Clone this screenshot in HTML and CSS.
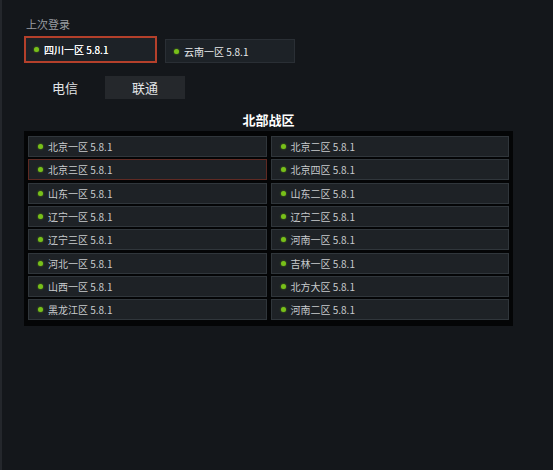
FILE: index.html
```html
<!DOCTYPE html>
<html lang="zh-CN">
<head>
    <meta charset="UTF-8">
    <title>选择服务器</title>
    <link rel="stylesheet" href="styles.css">
</head>
<body>
    <div class="page">
        <div class="label">上次登录</div>
        <div class="recent">
            <div class="recent-card selected"><span class="dot"></span>四川一区 5.8.1</div>
            <div class="recent-card"><span class="dot"></span>云南一区 5.8.1</div>
        </div>
        <div class="tabs">
            <div class="tab">电信</div>
            <div class="tab active">联通</div>
        </div>
        <div class="title">北部战区</div>
        <div class="panel">
            <div class="server"><span class="dot"></span>北京一区 5.8.1</div>
            <div class="server"><span class="dot"></span>北京二区 5.8.1</div>
            <div class="server selected"><span class="dot"></span>北京三区 5.8.1</div>
            <div class="server"><span class="dot"></span>北京四区 5.8.1</div>
            <div class="server"><span class="dot"></span>山东一区 5.8.1</div>
            <div class="server"><span class="dot"></span>山东二区 5.8.1</div>
            <div class="server"><span class="dot"></span>辽宁一区 5.8.1</div>
            <div class="server"><span class="dot"></span>辽宁二区 5.8.1</div>
            <div class="server"><span class="dot"></span>辽宁三区 5.8.1</div>
            <div class="server"><span class="dot"></span>河南一区 5.8.1</div>
            <div class="server"><span class="dot"></span>河北一区 5.8.1</div>
            <div class="server"><span class="dot"></span>吉林一区 5.8.1</div>
            <div class="server"><span class="dot"></span>山西一区 5.8.1</div>
            <div class="server"><span class="dot"></span>北方大区 5.8.1</div>
            <div class="server"><span class="dot"></span>黑龙江区 5.8.1</div>
            <div class="server"><span class="dot"></span>河南二区 5.8.1</div>
        </div>
    </div>
</body>
</html>
```

FILE: styles.css
```css
html, body {
    height: 100%;
}
body {
    margin: 0;
    background: #14171b;
    font-family: "Microsoft YaHei", "Noto Sans CJK SC", sans-serif;
    color: #d0d3d6;
    border-left: 2px solid #24272c;
    box-sizing: border-box;
}
.page {
    width: 489px;
    padding: 16px 0 0 22px;
}
.label {
    font-size: 11px;
    line-height: 16px;
    color: #9a9ea3;
    padding-left: 2px;
}
.recent {
    display: flex;
    align-items: flex-end;
    gap: 8px;
    margin-top: 4px;
}
.recent-card {
    display: flex;
    align-items: center;
    box-sizing: border-box;
    width: 130px;
    height: 24px;
    padding-left: 8px;
    background: #1d2227;
    border: 1px solid #2a2f35;
    font-size: 10px;
    color: #e8eaec;
}
.recent-card.selected {
    width: 133px;
    height: 27px;
    border: 2px solid #b4402b;
    color: #ffffff;
    text-shadow: 0 0 0.4px #ffffff;
}
.dot {
    display: inline-block;
    flex: none;
    width: 5px;
    height: 5px;
    border-radius: 50%;
    background: #78c01a;
    box-shadow: 0 0 2px #5f9a12;
    margin-right: 5px;
}
.tabs {
    display: flex;
    margin-top: 13px;
    padding-left: 1px;
}
.tab {
    width: 80px;
    height: 23px;
    line-height: 23px;
    text-align: center;
    font-size: 13px;
    color: #e2e4e6;
}
.tab.active {
    background: #25282c;
}
.title {
    margin-top: 10px;
    height: 22px;
    line-height: 22px;
    text-align: center;
    font-size: 13px;
    font-weight: bold;
    color: #ffffff;
}
.panel {
    display: grid;
    grid-template-columns: 1fr 1fr;
    grid-auto-rows: 21px;
    column-gap: 4px;
    row-gap: 2.33px;
    padding: 5px 4px 6px;
    background: #040506;
}
.server {
    display: flex;
    align-items: center;
    padding-left: 9px;
    background: #1e2226;
    border: 1px solid #30363b;
    font-size: 10px;
    color: #c9ccce;
}
.server.selected {
    border-color: #5f2a23;
}
```
